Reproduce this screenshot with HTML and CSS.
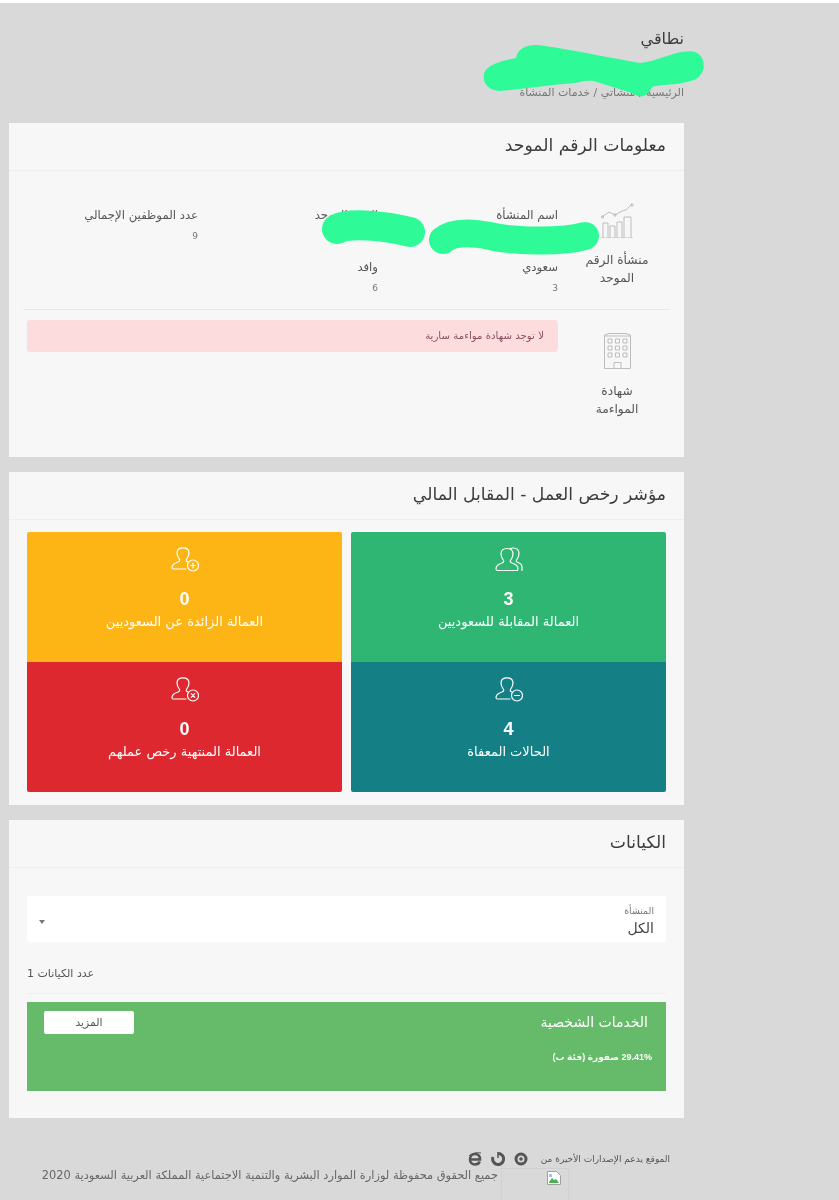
FILE: index.html
```html
<!DOCTYPE html>
<html lang="ar" dir="rtl">
<head>
<meta charset="utf-8">
<title>نطاقي</title>
<link rel="stylesheet" href="styles.css">
</head>
<body>
<div class="top-strip"></div>
<main class="page">
  <header class="page-head">
    <h1 class="page-title">نطاقي</h1>
    <div class="crumbs">الرئيسية / منشآتي / خدمات المنشأة</div>
  </header>

  <section class="panel">
    <h2 class="panel-title">معلومات الرقم الموحد</h2>
    <div class="info-row first">
      <div class="info-side">
        <svg class="side-icon chart" viewBox="0 0 33 35" fill="none" stroke="#bdbdbd" stroke-width="1">
          <path d="M2 35V20h5v15M9 35V23h5v12M16 35V19h5v16M23 35V14h7v21M0 35h32"/>
          <path d="M1 14l7-5 6 3 7-4 4-1 6-6"/>
          <circle cx="1.500" cy="14" r="1.200"/><circle cx="14" cy="12" r="1.200"/><circle cx="31" cy="2" r="1.200"/>
        </svg>
        <div class="side-label">منشأة الرقم<br>الموحد</div>
      </div>
      <div class="info-grid">
        <div class="info-item"><div class="info-label">اسم المنشأة</div></div>
        <div class="info-item"><div class="info-label">الرقم الموحد</div></div>
        <div class="info-item"><div class="info-label">عدد الموظفين الإجمالي</div><div class="info-value">9</div></div>
        <div class="info-item"><div class="info-label">سعودي</div><div class="info-value">3</div></div>
        <div class="info-item"><div class="info-label">وافد</div><div class="info-value">6</div></div>
      </div>
    </div>
    <div class="info-row second">
      <div class="info-side">
        <svg class="side-icon building" viewBox="0 0 27 36" fill="none" stroke="#bdbdbd" stroke-width="1">
          <path d="M.5 35.500V2L5 .5h17L26.500 2v33.500zM.5 3h26M10 35.500v-6h7v6"/>
          <path d="M4 6h4v4H4zM11.500 6h4v4h-4zM19 6h4v4h-4zM4 13h4v4H4zM11.500 13h4v4h-4zM19 13h4v4h-4zM4 20h4v4H4zM11.500 20h4v4h-4zM19 20h4v4h-4z"/>
        </svg>
        <div class="side-label">شهادة<br>المواءمة</div>
      </div>
      <div class="alert">لا توجد شهادة مواءمة سارية</div>
    </div>
  </section>

  <section class="panel">
    <h2 class="panel-title">مؤشر رخص العمل - المقابل المالي</h2>
    <div class="tiles">
      <div class="tile green">
        <svg class="tile-icon" viewBox="0 0 28 25" fill="none" stroke="#fff" stroke-width="1.200" stroke-linecap="round">
          <path d="M2.500 23.500C1.500 23.500 1 23 1 21.500c0-3 3-4.500 6-5.500 1.500-.6 2-1.500 1.500-2.500C7 11.500 6 9.500 6 7c0-3.500 2.500-5.500 6-5.500s6 2 6 5.500c0 2.500-1 4.500-2.500 6.500-.5 1 0 2 1.500 2.500 3 1 6 2.500 6 5.500 0 1.500-.5 2-1.500 2z"/>
          <path d="M15 1.800c1-.6 2-.8 3-.8 3.500 0 6 2 6 5.500 0 2.500-1 4.500-2.500 6.500-.5 1 0 2 1.500 2.500 2 .7 4 2 4 4.500v3.500"/>
        </svg>
        <div class="tile-num">3</div>
        <div class="tile-label">العمالة المقابلة للسعوديين</div>
      </div>
      <div class="tile amber">
        <svg class="tile-icon" viewBox="0 0 28 25" fill="none" stroke="#fff" stroke-width="1.200" stroke-linecap="round">
          <path d="M15 22H2.500C1.500 22 1 21.500 1 20.500c0-3 3-4.500 6-5.500 1.500-.6 2-1.500 1.500-2.500C7 10.500 6 8.500 6 6c0-3.500 2.500-5.200 6-5.200s6 1.700 6 5.200c0 2.500-1 4.500-2.500 6.500-.5 1 0 2 1.200 2.300"/>
          <circle cx="22" cy="18.500" r="5.500"/><path d="M22 16v5M19.500 18.500h5"/>
        </svg>
        <div class="tile-num">0</div>
        <div class="tile-label">العمالة الزائدة عن السعوديين</div>
      </div>
      <div class="tile teal">
        <svg class="tile-icon" viewBox="0 0 28 25" fill="none" stroke="#fff" stroke-width="1.200" stroke-linecap="round">
          <path d="M15 22H2.500C1.500 22 1 21.500 1 20.500c0-3 3-4.500 6-5.500 1.500-.6 2-1.500 1.500-2.500C7 10.500 6 8.500 6 6c0-3.500 2.500-5.200 6-5.200s6 1.700 6 5.200c0 2.500-1 4.500-2.500 6.500-.5 1 0 2 1.200 2.300"/>
          <circle cx="22" cy="18.500" r="5.500"/><path d="M19.500 18.500h5"/>
        </svg>
        <div class="tile-num">4</div>
        <div class="tile-label">الحالات المعفاة</div>
      </div>
      <div class="tile red">
        <svg class="tile-icon" viewBox="0 0 28 25" fill="none" stroke="#fff" stroke-width="1.200" stroke-linecap="round">
          <path d="M15 22H2.500C1.500 22 1 21.500 1 20.500c0-3 3-4.500 6-5.500 1.500-.6 2-1.500 1.500-2.500C7 10.500 6 8.500 6 6c0-3.500 2.500-5.200 6-5.200s6 1.700 6 5.200c0 2.500-1 4.500-2.500 6.500-.5 1 0 2 1.200 2.300"/>
          <circle cx="22" cy="18.500" r="5.500"/><path d="M20.200 16.700l3.600 3.600M23.800 16.700l-3.600 3.600"/>
        </svg>
        <div class="tile-num">0</div>
        <div class="tile-label">العمالة المنتهية رخص عملهم</div>
      </div>
    </div>
  </section>

  <section class="panel">
    <h2 class="panel-title">الكيانات</h2>
    <div class="entities">
      <div class="select-box">
        <div class="select-text">
          <div class="select-label">المنشأة</div>
          <div class="select-value">الكل</div>
        </div>
        <span class="select-arrow"></span>
      </div>
      <div class="count" dir="rtl">عدد الكيانات 1</div>
      <div class="service">
        <div class="service-text">
          <div class="service-title">الخدمات الشخصية</div>
          <div class="service-sub">29.41% صفورة (فئة ب)</div>
        </div>
        <div class="service-btn">المزيد</div>
      </div>
    </div>
  </section>

  <footer class="foot">
    <div class="foot-support">
      <span>الموقع يدعم الإصدارات الأخيرة من</span>
      <svg class="browser" viewBox="0 0 14 14"><circle cx="7" cy="7" r="5" fill="none" stroke="#555" stroke-width="3"/><circle cx="7" cy="7" r="1.800" fill="#555"/></svg>
      <svg class="browser" viewBox="0 0 14 14"><path d="M7 1.500A5.500 5.500 0 1 1 2 5" fill="none" stroke="#555" stroke-width="3"/><path d="M7 0v6" stroke="#555" stroke-width="1.500"/></svg>
      <svg class="browser" viewBox="0 0 14 14"><path d="M2.500 7.500h9.500C12 4 10 2 7 2S2 4.500 2 7.500s2 5 5 5c2.200 0 4-1 4.700-3" fill="none" stroke="#555" stroke-width="2.500"/><path d="M1 4C3 1.500 9 0 13 1" fill="none" stroke="#555" stroke-width="1"/></svg>
    </div>
    <div class="foot-legal">
      <div class="broken-image">
        <svg class="broken-icon" viewBox="0 0 16 16"><path d="M1.500 1.500h9l4 4v9h-13z" fill="#fff" stroke="#a0a0a0"/><path d="M3 12l3-4 2 2 2-1 3 4H3z" fill="#4caf50"/><path d="M3 4h3v3H3z" fill="#9ec5f0"/></svg>
      </div>
      <div class="legal-text">جميع الحقوق محفوظة لوزارة الموارد البشرية والتنمية الاجتماعية المملكة العربية السعودية 2020</div>
    </div>
  </footer>
</main>

<svg class="scribbles" viewBox="0 0 839 1200" aria-hidden="true">
  <path class="fill" d="M484 74C486 64 505 60 516 58C518 47 530 43 545 46C580 51 615 59 640 63C660 61 680 48 695 52C707 57 706 73 696 79C680 86 660 84 652 87C648 97 640 99 632 93L600 83C590 79 585 81 575 83C550 85 520 89 500 91C488 91 482 82 484 74Z"/>
  <path class="stroke s2" d="M443 240C452 232 470 232 490 236C510 241 560 243 585 236"/>
  <path class="stroke s3" d="M337 229C350 222 385 226 410 232"/>
</svg>
</body>
</html>
```
FILE: styles.css
```css
* { box-sizing: border-box; }
html, body { margin: 0; padding: 0; }
body {
  position: relative;
  height: 1200px;
  overflow: hidden;
  background: #d9d9d9;
  color: #444;
  font-family: "DejaVu Sans", sans-serif;
}
.top-strip { height: 3px; background: #fff; }
.page { width: 675px; margin-right: 155px; filter: blur(0.4px); }

.page-head { padding-top: 24px; }
.page-title { margin: 0; font-size: 16px; line-height: 24px; font-weight: 400; color: #3c3c3c; }
.crumbs { margin-top: 35px; font-size: 11px; line-height: 14px; color: #777; }

.panel { margin-top: 15px; background: #f7f7f7; }
.page-head + .panel { margin-top: 23px; }
.panel-title {
  margin: 0;
  height: 48px;
  padding: 0 18px;
  border-bottom: 1px solid #eeeeee;
  font-size: 17.200px;
  line-height: 45px;
  font-weight: 400;
  color: #3c3c3c;
}

.info-row { display: flex; margin: 0 14px; }
.info-row.first { padding: 36px 0 13px; border-bottom: 1px solid #e8e8e8; }
.info-row.first .info-side { margin-top: -4px; }
.info-row.second { padding: 10px 0 39px; }
.info-side { width: 106px; margin-left: 6px; flex: none; text-align: center; }
.info-row.second .info-side { padding-top: 13px; }
.side-icon { display: block; margin: 0 auto; }
.chart { width: 33px; height: 35px; }
.building { width: 27px; height: 36px; }
.side-label { margin-top: 14px; font-size: 12.200px; line-height: 17.500px; color: #555; }

.info-grid { display: grid; grid-template-columns: repeat(3, 180px); row-gap: 15px; }
.info-item { height: 37px; }
.info-label { font-size: 11.700px; line-height: 16px; color: #555; }
.info-value { margin-top: 5px; font-size: 9px; line-height: 16px; color: #777; }

.alert {
  width: 531px;
  height: 32px;
  padding-right: 14px;
  border-radius: 3px;
  background: #fddcdd;
  font-size: 10.200px;
  line-height: 32px;
  color: #8a5060;
}

.tiles {
  display: grid;
  grid-template-columns: 315px 315px;
  column-gap: 9px;
  padding: 12px 18px 13px;
}
.tile { height: 130px; padding-top: 15px; text-align: center; color: #fff; }
.tile-icon { display: block; width: 28px; height: 25px; margin: 0 auto; }
.tile-num { margin-top: 17px; font-family: "Liberation Sans", sans-serif; font-size: 18px; line-height: 20px; font-weight: 700; }
.tile-label { margin-top: 3px; font-size: 13px; line-height: 20px; }
.green { background: #2eb672; border-radius: 2px 2px 0 0; }
.amber { background: #fdb515; border-radius: 2px 2px 0 0; }
.teal { background: #148086; border-radius: 0 0 2px 2px; }
.red { background: #dc282e; border-radius: 0 0 2px 2px; }

.entities { padding: 28px 18px 27px; }
.select-box {
  display: flex;
  justify-content: space-between;
  height: 46px;
  padding: 8px 12px 0 12px;
  background: #fff;
  border-radius: 3px;
}
.select-label { font-size: 9.400px; line-height: 14px; color: #777; }
.select-value { font-size: 14px; line-height: 20px; color: #444; }
.select-arrow {
  align-self: center;
  width: 0;
  height: 0;
  margin-top: -2px;
  border-top: 4px solid #777;
  border-left: 3px solid transparent;
  border-right: 3px solid transparent;
}
.count {
  display: flex;
  justify-content: flex-end;
  height: 28px;
  margin-top: 24px;
  padding-bottom: 11px;
  border-bottom: 1px solid #eeeeee;
  font-size: 11px;
  line-height: 16px;
  color: #555;
}
.service {
  display: flex;
  justify-content: space-between;
  height: 89px;
  margin-top: 8px;
  padding: 9px 14px 0 17px;
  background: #66bb6a;
  color: #fff;
}
.service-title { margin-right: 4px; font-size: 14px; line-height: 22px; }
.service-sub { margin-top: 17px; font-family: "Liberation Sans", "DejaVu Sans", sans-serif; font-size: 9px; line-height: 14px; font-weight: 700; }
.service-btn {
  width: 90px;
  height: 23px;
  border-radius: 2px;
  background: #fff;
  font-size: 10.800px;
  line-height: 23px;
  text-align: center;
  color: #555;
}

.foot { padding-top: 33px; }
.foot-support {
  display: flex;
  align-items: center;
  height: 15px;
  padding-right: 14px;
  font-size: 9px;
  color: #555;
}
.browser { width: 14px; height: 14px; margin-right: 9px; }
.foot-support .browser:first-of-type { margin-right: 13px; }
.foot-legal { display: flex; margin-top: 2px; margin-right: 115px; color: #666; }
.broken-image {
  width: 68px;
  height: 40px;
  flex: none;
  padding: 1px 6px 0 0;
  border: 1px solid #d0d0d0;
}
.broken-icon { display: block; width: 16px; height: 16px; }
.legal-text { margin-right: 3px; font-size: 11.400px; line-height: 14px; white-space: nowrap; }

.scribbles { position: absolute; top: 0; left: 0; width: 839px; height: 1200px; pointer-events: none; }
.scribbles .fill { fill: #2efb98; }
.scribbles .stroke { fill: none; stroke: #2efb98; stroke-linecap: round; stroke-linejoin: round; }
.scribbles .s2 { stroke-width: 28; }
.scribbles .s3 { stroke-width: 30; }
```
